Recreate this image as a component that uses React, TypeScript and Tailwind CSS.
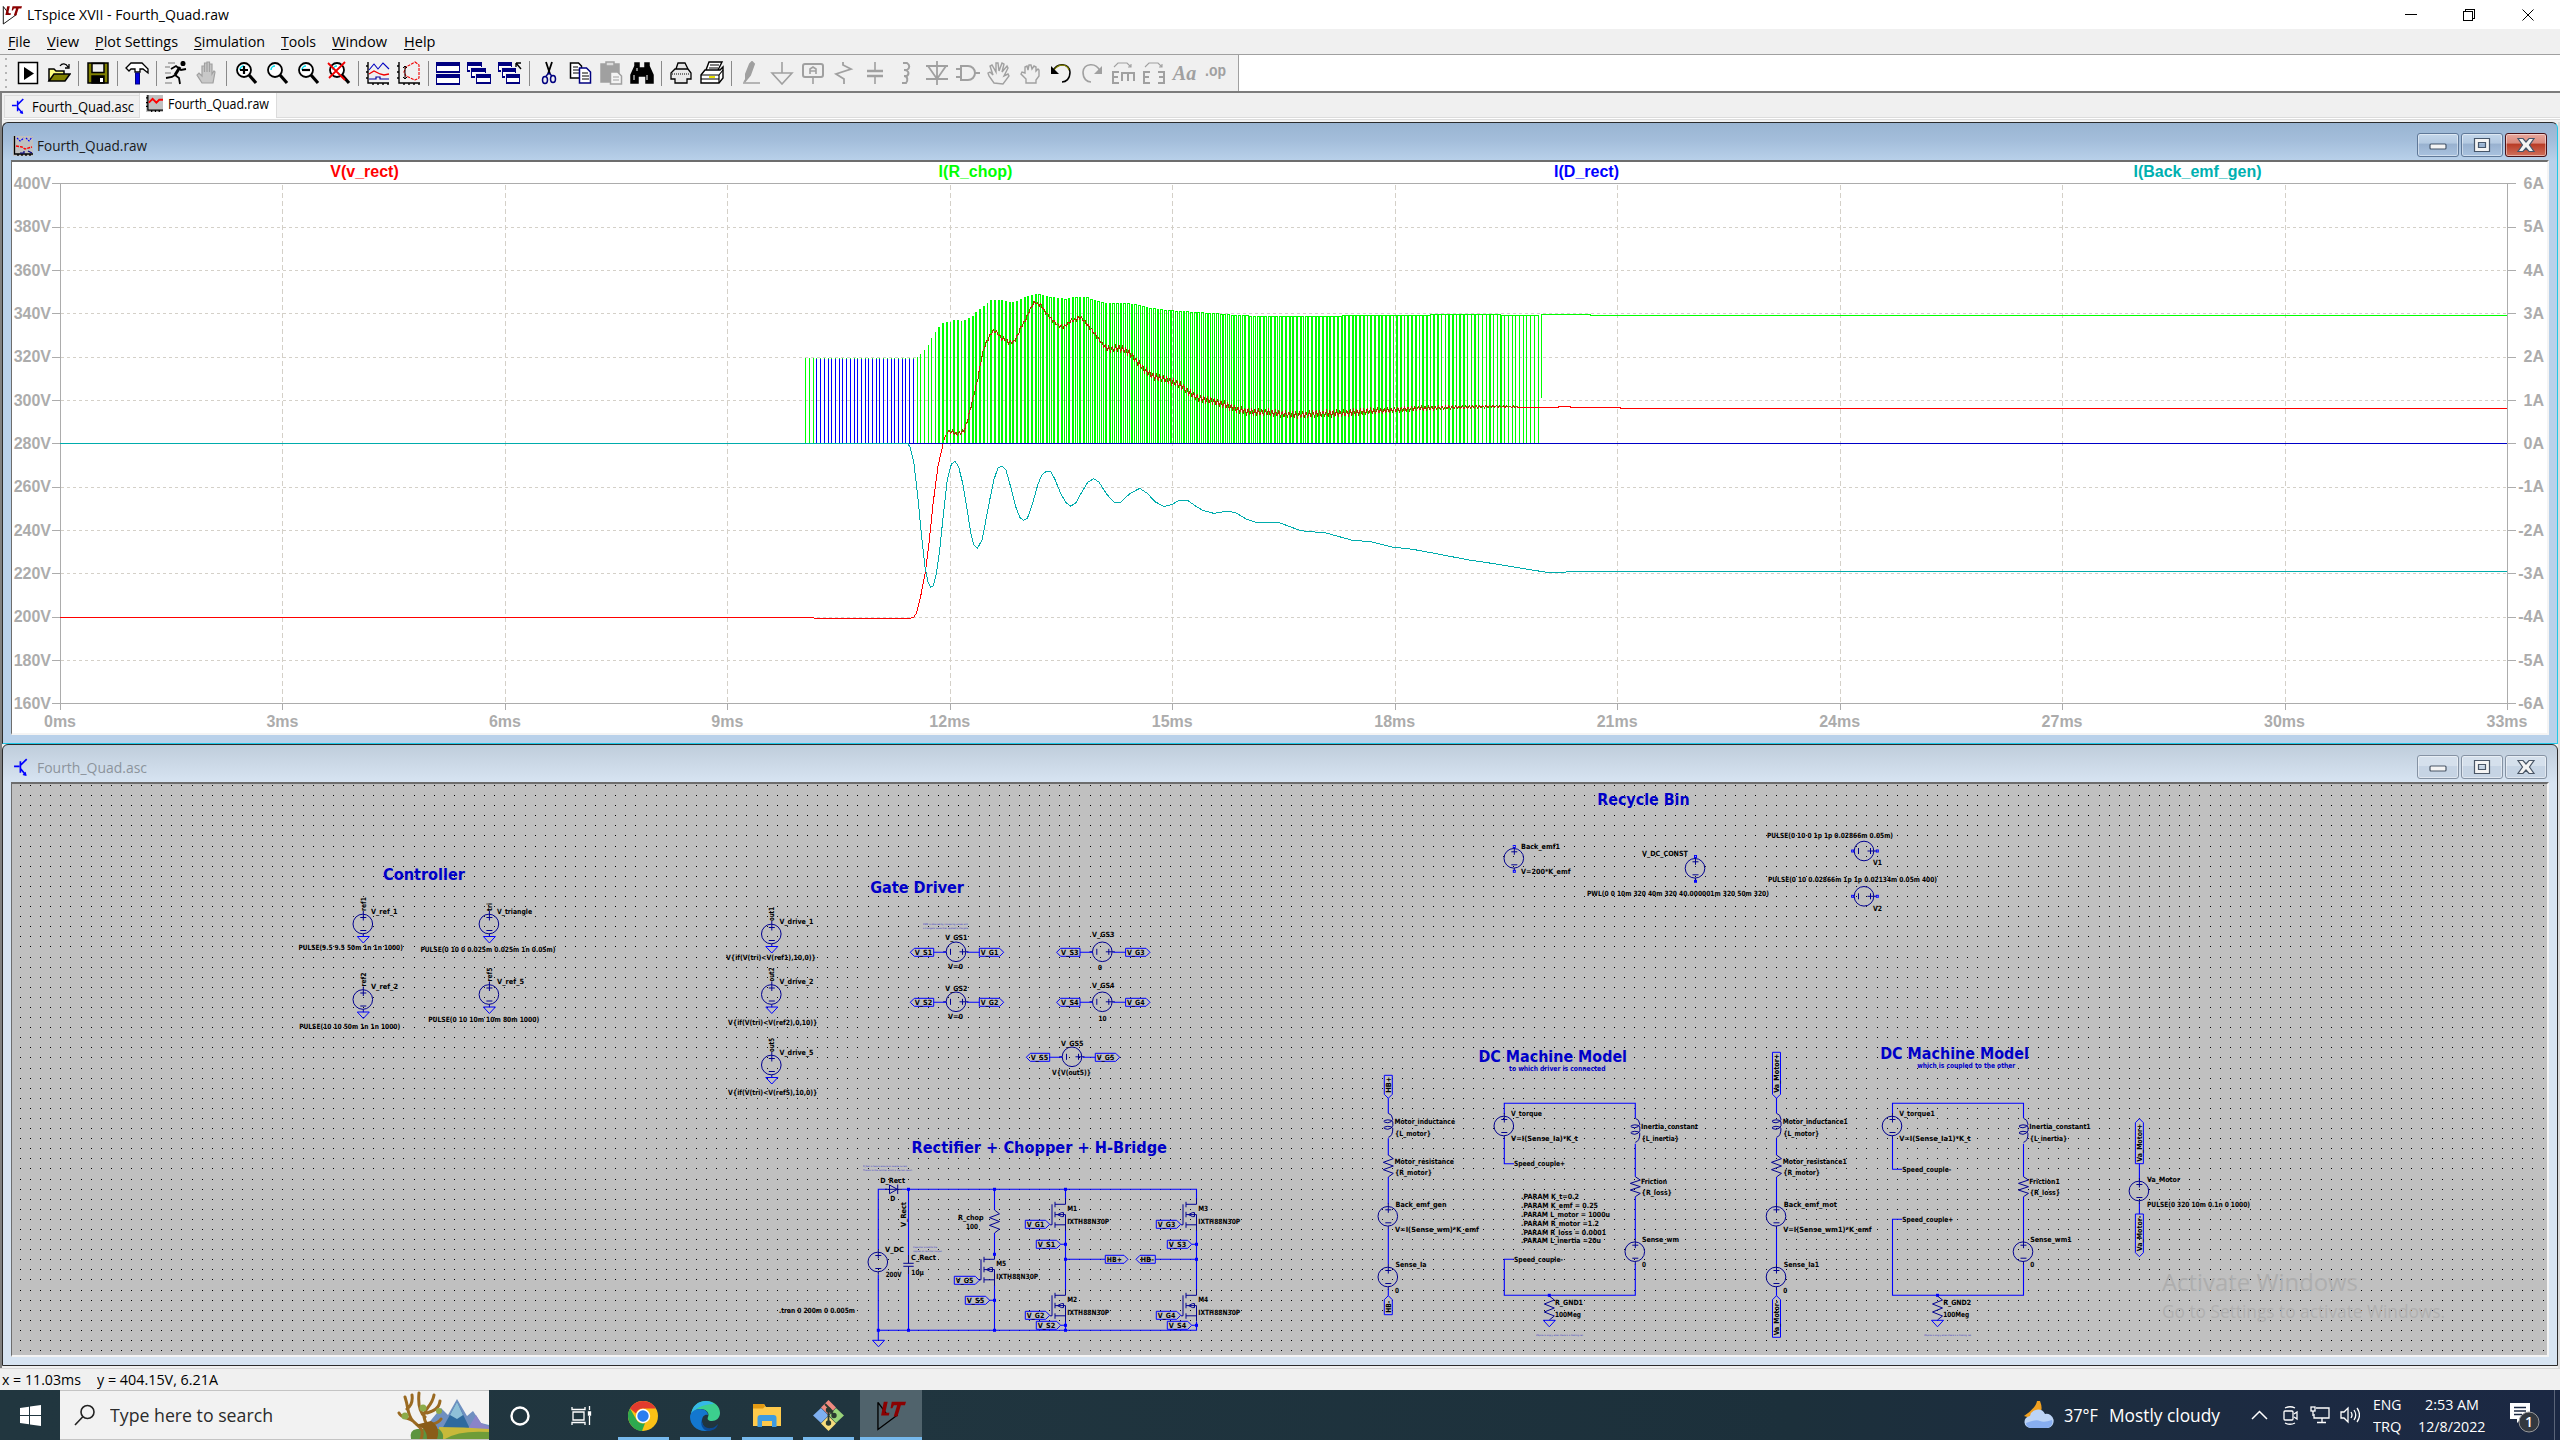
import React, { useLayoutEffect, useRef, type ReactNode } from "react";

const UI = "font-['Open_Sans','Noto_Sans',sans-serif]";

/* Text squeezed or stretched horizontally to a fixed width. */
function Fit({ w, className = "", children }: { w: number; className?: string; children: ReactNode }) {
  const ref = useRef<HTMLSpanElement>(null);
  useLayoutEffect(() => {
    const el = ref.current;
    if (el && el.offsetWidth) el.style.transform = `scaleX(${w / el.getBoundingClientRect().width})`;
  }, [w]);
  return (
    <span className={"inline-block shrink-0 whitespace-nowrap " + className} style={{ width: w }}>
      <span ref={ref} className="inline-block origin-left">{children}</span>
    </span>
  );
}

/* ------------------------------------------------------------------ */
/* Toolbar icons                                                       */
/* ------------------------------------------------------------------ */

function Ic({ children }: { children: ReactNode }) {
  return (
    <div className="flex w-[31px] shrink-0 items-center justify-center">
      <svg width="24" height="24" viewBox="0 0 24 24" fill="none" stroke="#000" strokeWidth="1.5">{children}</svg>
    </div>
  );
}
const Sep = () => (
  <div className="flex w-2 shrink-0 items-center justify-center">
    <div className="h-[25px] w-px bg-[#8a8a8a]" />
  </div>
);
const G = "#a0a0a0";

function Lens({ mark, color = "#00e0f0" }: { mark?: ReactNode; color?: string }) {
  return (
    <>
      <circle cx="10" cy="9" r="7" fill="#fff" strokeWidth="1.8" />
      <path d="M6 9a4 4 0 0 1 4-4" stroke={color} />
      <path d="M15 14l7 8" strokeWidth="3.2" />
      {mark}
    </>
  );
}
function MiniWin({ x, y, w, h }: { x: number; y: number; w: number; h: number }) {
  return (
    <g stroke="none" shapeRendering="crispEdges">
      <rect x={x - 1} y={y - 1} width={w + 1} height={h + 1} fill="#f0f0f0" />
      <rect x={x} y={y} width={w} height={h} fill="#000080" />
      <rect x={x + 1} y={y + 4} width={w - 2} height={h - 6} fill="#fff" />
    </g>
  );
}

function Toolbar() {
  return (
    <div className="flex h-[38px] border-b-2 border-[#7c7c7c] bg-white">
      <div className="flex w-[1239px] shrink-0 border-r border-[#a0a0a0] bg-[#f0f0f0]">
        <div className="flex w-[12px] shrink-0 flex-col items-center justify-center gap-[5px]">
          {[0, 1, 2, 3, 4].map((i) => <div key={i} className="size-[2px] bg-[#b4b4b4]" />)}
        </div>
        <Ic><rect x="2.5" y="1.500" width="19" height="21" fill="#fff" /><path d="M8 6l10 6.500-10 6.500z" fill="#000" stroke="none" /></Ic>
        <Ic><path d="M2 20V8h5l2 2h8v4" fill="#ffff80" /><path d="M2 20l5-7h16l-5 7z" fill="#808000" /><path d="M13 5c2-3 6-3 8 1m1-3v4h-4" strokeWidth="1.3" /></Ic>
        <Sep />
        <Ic><rect x="2" y="2" width="20" height="20" fill="#808000" /><rect x="6" y="2.5" width="12" height="9" fill="#f0f0f0" /><rect x="6" y="15" width="12" height="7" fill="#000" /><rect x="14" y="17" width="3" height="4" fill="#fff" stroke="none" /></Ic>
        <Sep />
        <Ic><path d="M1 7l5-5h11l6 6v4l-5-4h-3v3h-5V8H6l-2 2z" fill="#fff" strokeWidth="1.3" /><rect x="10.500" y="12" width="4" height="11" fill="#0000e0" stroke="#000080" strokeWidth="1" /></Ic>
        <Sep />
        <Ic><circle cx="19" cy="2.500" r="1.800" fill="#000" /><path d="M16 6l-5 8" strokeWidth="3" /><path d="M7 8l5-3 5 4 5-1M11 14l-3 2-6 1m9-3l4 3 1 6" strokeWidth="1.800" /><path d="M4 2h7M1 6h5M1 22h7M1 12h6" strokeWidth="1" stroke="#777" /></Ic>
        <Ic><path d="M7 22l-5-8 2-2 3 3V5h2.500v6V2h2.500v9V1h2.500v10V3h2.500v10l2-3 1 1-2 11z" fill="#c8c8c8" stroke={G} strokeWidth="1.2" /></Ic>
        <Sep />
        <Ic><Lens mark={<path d="M6 9h8M10 5v8" strokeWidth="2.2" />} /></Ic>
        <Ic><Lens /></Ic>
        <Ic><Lens mark={<path d="M6 9h8" strokeWidth="2.2" />} /></Ic>
        <Ic><Lens mark={<path d="M1 2l17 17M18 1L2 17" stroke="#f00000" strokeWidth="1.800" />} /></Ic>
        <Sep />
        <Ic><path d="M2 1v21h21M2 5H0M2 11H0M2 17H0M7 22v2M12 22v2M17 22v2M22 22v2" strokeWidth="1.4" /><path d="M3 9l5-6 4 5 5-6 6 6" stroke="#0000c0" strokeWidth="1.1" /><path d="M3 13l5-3 6 3 4 1 5-1" stroke="#f00000" strokeWidth="1.300" /><path d="M3 18h7v-2h4v2h9" stroke="#0000a0" strokeWidth="1.2" /></Ic>
        <Ic><path d="M2 1v21h21M2 5H0M2 11H0M2 17H0M7 22v2M12 22v2M17 22v2M22 22v2" strokeWidth="1.4" /><path d="M18 1l4 3v13l-4 2-9-4-2-4 2-5z" stroke="#f00000" strokeWidth="1.1" strokeDasharray="3 1" /><path d="M8 5v13M6 7l2-2 2 2M6 16l2 2 2-2" strokeWidth="1" /></Ic>
        <Sep />
        <Ic><MiniWin x={0} y={1} w={24} h={11} /><MiniWin x={0} y={13} w={24} h={11} /></Ic>
        <Ic><MiniWin x={0} y={1} w={15} h={10} /><MiniWin x={4} y={7} w={15} h={10} /><MiniWin x={9} y={13} w={15} h={10} /></Ic>
        <Ic><MiniWin x={0} y={1} w={14} h={10} /><MiniWin x={4} y={7} w={14} h={10} /><MiniWin x={8} y={13} w={14} h={10} /><path d="M18 2h5M18 2v4M18 2l5 6" strokeWidth="1.4" /></Ic>
        <Sep />
        <Ic><path d="M9 1l4 12M15 1l-4 12" strokeWidth="1.8" /><ellipse cx="8" cy="19" rx="2.500" ry="3.500" stroke="#000080" /><ellipse cx="16" cy="18" rx="2.500" ry="3.500" stroke="#000080" /><path d="M12 12l-3 3M12 12l3 3" stroke="#000080" /></Ic>
        <Ic><path d="M2.500 2h8l3 3v12h-11z" fill="#fff" /><path d="M5 6h5M5 9h6M5 12h6" strokeWidth="1" /><path d="M11.500 7h7l4 4v11h-11z" fill="#fff" stroke="#000080" /><path d="M14 12h6M14 15h7M14 18h7" strokeWidth="1" /></Ic>
        <Ic><path d="M2 3h18v18H2z" fill={G} stroke={G} /><path d="M7 1h8v4H7z" fill="#ddd" stroke={G} /><path d="M11.500 11h7l4 4v8h-11z" fill="#f4f4f4" stroke={G} /><path d="M14 16h6M14 19h6" stroke={G} strokeWidth="1" /></Ic>
        <Ic><path d="M1 22v-8L5 5V2h4v5h6V2h4v3l4 9v8h-7v-7H8v7z" fill="#000" /><path d="M4 14v5M17 14v5M7 7v3" stroke="#fff" strokeWidth="1" /></Ic>
        <Sep />
        <Ic><path d="M7 8l2-6h7l3 6M2 12l4-4h13l3 4v6h-4v4H6v-4H2z" fill="#e8e8e8" strokeWidth="1.3" /><path d="M3 13h18" strokeWidth="1.2" strokeDasharray="1 1" /></Ic>
        <Ic><path d="M6 9l3-8h13l-4 8M1 14l4-5h15l3-3v11l-4 5H1z" fill="#fff" strokeWidth="1.4" /><path d="M1 14h18v8M19 14l4-5M10 4h9M9 7h9M1 18h18" strokeWidth="1.2" /><path d="M9 16h6" stroke="#e8e000" strokeWidth="2" /></Ic>
        <Sep />
        <Ic><path d="M7 13l4-10 2-2 2 2-4 11-4 5z" fill={G} stroke={G} strokeWidth="2" /><path d="M4 22h17M5 21l3-5" stroke={G} strokeWidth="1.3" /></Ic>
        <Ic><path d="M12 1v11M2 12h20L12 23z" stroke={G} strokeWidth="1.6" /></Ic>
        <Ic><rect x="2" y="3" width="20" height="13" rx="2" stroke={G} strokeWidth="2" /><path d="M9 13V8l3-2 3 2v5M9 10h6M12 16v7" stroke={G} strokeWidth="1.6" /></Ic>
        <Ic><path d="M11 1v3l8 4L4 13l8 5v5" stroke={G} strokeWidth="1.8" /></Ic>
        <Ic><path d="M12 1v8M12 15v8" stroke={G} strokeWidth="1.6" /><path d="M4 10h16M4 15h16" stroke={G} strokeWidth="2.6" /></Ic>
        <Ic><path d="M9 2h4c3 2 3 5 0 7h-3c4 0 6 3 3 6h-3c4 0 4 5 2 7H8" stroke={G} strokeWidth="2" /></Ic>
        <Ic><path d="M12 0v24M1 5h22M1 18h22M3 5l9 13 9-13" stroke={G} strokeWidth="1.8" /></Ic>
        <Ic><path d="M5 5h7a7 7 0 0 1 0 14H5zM0 8h5M0 16h5M19 12h5" stroke={G} strokeWidth="2" /></Ic>
        <Ic><path d="M7 22l-5-7-1-3 2-1 3 3L3 5l2-1 4 7L9 2h2l1 8 3-8 2 1-2 8 5-6 1 2-4 8 4-2 1 2-6 8z" stroke={G} strokeWidth="1.4" /></Ic>
        <Ic><path d="M8 22v-4l-5-5 1-2 3 1 0-6 2-1 1 4 1-5 2 0 1 4 2-3 2 1v4l2-2 1 1v6l-3 4v3z" stroke={G} strokeWidth="1.4" /></Ic>
        <Ic><path d="M4 10c4-9 16-8 17 1 0 7-4 10-8 10" stroke="#000" strokeWidth="1.5" /><path d="M5 9c5-7 13-6 15 0" stroke="#808000" strokeWidth="1.2" /><path d="M2 5v8h8z" fill="#000" stroke="none" /></Ic>
        <Ic><path d="M20 10C16 1 4 2 3 11c0 7 4 10 8 10" stroke={G} strokeWidth="1.6" /><path d="M22 5v8h-8z" fill={G} stroke="none" /></Ic>
        <Ic><path d="M3 6l4-4h9l4 4m0-3v3h-3" stroke={G} strokeWidth="1.1" /><path d="M8 11H2v11h6M2 16h5M11 20v-8h13M17 12v8M23 12v8" stroke={G} strokeWidth="2" /></Ic>
        <Ic><path d="M3 6l4-4h9l4 4m0-3v3h-3" stroke={G} strokeWidth="1.1" /><path d="M8 11H2v11h6M2 16h5M16 11h6v11h-6M22 16h-5" stroke={G} strokeWidth="2" /></Ic>
        <div className="flex w-[31px] shrink-0 items-center justify-center font-['Liberation_Serif',serif] text-[20px] font-bold italic text-[#a0a0a0]">Aa</div>
        <div className="flex w-[31px] shrink-0 items-center justify-center pb-1 font-['Liberation_Sans',sans-serif] text-[17px] font-bold text-[#a0a0a0]"><Fit w={21}>.op</Fit></div>
      </div>
    </div>
  );
}

/* ------------------------------------------------------------------ */
/* Logos                                                               */
/* ------------------------------------------------------------------ */

function LtLogo({ w = 20, h = 20 }: { w?: number; h?: number }) {
  return (
    <svg width={w} height={h} viewBox="0 0 20 20" preserveAspectRatio="none">
      <path d="M1.300 1.500v17.500L14.500 9.500M1.300 1.500L7 9" fill="none" stroke="#000" strokeWidth=".9" />
      <path d="M5.200 1.200h2.600L6.200 8.200H9l-.5 1.800H3.400zM10.500 1.200h9.500l-.7 2.200h-2.700l-2.300 7.200h-2.500l2.300-7.200h-2.200l-1 2h-1.200z" fill="#8b0000" />
    </svg>
  );
}
const AscIcon = ({ s = 18 }: { s?: number }) => (
  <svg width={s} height={s} viewBox="0 0 18 18" fill="none" stroke="#0000ff" strokeWidth="1.6">
    <path d="M1 8h5M7 3v11M7 7l6-6M7 10l5 6" /><path d="M13 17l-4-1 3-3z" fill="#0000ff" stroke="none" />
  </svg>
);
const RawIcon = ({ s = 18 }: { s?: number }) => (
  <svg width={s} height={s} viewBox="0 0 18 18" fill="none">
    <rect width="18" height="18" fill="#c0c0c0" />
    <path d="M2 0v16h16M0 3h2M0 8h2M0 12h2M6 16v2M10 16v2M14 16v2" stroke="#000" strokeWidth="1.3" />
    <path d="M3 8l4-4 4 4 3-3h4" stroke="#f00" strokeWidth="2" />
  </svg>
);
const PlotIcon = () => (
  <svg width="20" height="20" viewBox="0 0 20 20" fill="none">
    <rect width="20" height="20" fill="#c0c0c0" />
    <path d="M1.500 0v18H20M5 18v2M9 18v2M13 18v2M17 18v2" stroke="#000" strokeWidth="1.3" />
    <path d="M4 2l3 3 4-3M13 2l3 3 3-4" stroke="#00f" strokeWidth="1.1" strokeDasharray="2 1" />
    <path d="M3 10l6 1 3 2 7-2" stroke="#f00" strokeWidth="1.4" strokeDasharray="3 1" />
    <path d="M7 17h4v-2M15 15l4 2" stroke="#000080" strokeWidth="1.2" />
  </svg>
);

/* ------------------------------------------------------------------ */
/* Child window frame                                                  */
/* ------------------------------------------------------------------ */

function WinButton({ kind, active }: { kind: "min" | "max" | "close"; active: boolean }) {
  const tone =
    !active ? "border-[#8592a3] bg-[linear-gradient(#d5e0ec_45%,#c6d4e4_45%)]"
    : kind === "close" ? "border-[#4a1015] bg-[linear-gradient(#e9a79c_0%,#d98a7d_42%,#b83a24_45%,#d0705c_100%)]"
    : "border-[#5f7898] bg-[linear-gradient(#c3d6ea_0%,#b3c9e1_42%,#98b1cf_45%,#a9c2df_100%)]";
  const ink = active ? "#46566a" : "#4a5666";
  return (
    <div className={"flex h-6 w-[42px] items-center justify-center rounded-[3px] border shadow-[inset_0_0_0_1px_rgba(255,255,255,0.45)] " + tone}>
      <svg width="20" height="16" viewBox="0 0 20 16" fill="#f4f4f4" stroke={ink} strokeWidth="1.200">
        {kind === "min" && <rect x="2" y="7" width="16" height="5" rx="1" />}
        {kind === "max" && <path fillRule="evenodd" d="M2.500 1.500h15v13h-15zM6.500 5.500v5h7v-5z" />}
        {kind === "close" && <path d="M2 1.500h5l3 3.500 3-3.500h5L13.500 8l4.500 6.500h-5L10 11l-3 3.500H2L6.500 8z" />}
      </svg>
    </div>
  );
}

function ChildWindow({ active, title, icon, children }: { active: boolean; title: string; icon: ReactNode; children: ReactNode }) {
  return (
    <section
      className={
        "flex h-[622px] flex-col rounded-t-[6px] border border-[#2b2b2b] px-2 pb-2 " +
        (active
          ? "border-r-[#20c8e8] border-b-[#20c8e8] bg-[#b9d1ea] bg-[linear-gradient(#99b4d1_0px,#a4bedb_18px,#b9d1ea_38px)]"
          : "bg-[#d7e4f2] bg-[linear-gradient(#bfcddb_0px,#cbd8e6_18px,#d7e4f2_38px)]")
      }
    >
      <header className="flex h-[37px] shrink-0 items-center pr-[2px] pl-[2px]">
        <span className="mt-[8px] flex w-[24px]">{icon}</span>
        <Fit w={110} className={UI + " mt-[6px] text-[15px] leading-5 " + (active ? "text-[#1a1a1a]" : "text-[#8c949c]")}>{title}</Fit>
        <div className="mt-[7px] ml-auto flex gap-[2px]">
          <WinButton kind="min" active={active} />
          <WinButton kind="max" active={active} />
          <WinButton kind="close" active={active} />
        </div>
      </header>
      <div className="flex-1 overflow-hidden border-t-2 border-r-2 border-b-2 border-l border-t-[#6d6d6d] border-r-[#f4f4f4] border-b-[#f4f4f4] border-l-[#6d6d6d]">{children}</div>
    </section>
  );
}

/* ------------------------------------------------------------------ */
/* Waveform plot (coordinates are in page pixels)                      */
/* ------------------------------------------------------------------ */

type Pt = [number, number];
const px = (v: number) => 780 + v / 1.96;
const py = (v: number) => 270 + v / 3;

const RED: Pt[] = [[66, 1042], [67, 1045], [255, 1045], [262, 1042], [268, 1028], [275, 985], [285, 905], [292, 820], [300, 700], [310, 585], [318, 535], [322, 505], [328, 486]];
const RIPPLE: Pt[] = [[328, 486], [337, 484], [345, 492], [356, 488], [362, 480], [368, 450], [375, 405], [381, 370], [388, 325], [395, 265], [402, 225], [410, 200], [418, 182], [426, 188], [434, 205], [441, 208], [448, 216], [458, 216], [465, 200], [472, 172], [480, 155], [488, 125], [495, 105], [500, 93], [505, 104], [512, 104], [517, 120], [527, 138], [535, 152], [545, 165], [555, 172], [563, 162], [572, 150], [580, 150], [585, 142], [592, 145], [600, 160], [610, 178], [620, 197], [632, 222], [642, 236], [652, 237], [665, 234], [675, 240], [685, 248], [700, 275], [715, 300], [733, 320], [750, 325], [768, 335], [785, 345], [800, 365], [820, 385], [845, 392], [870, 403], [890, 415], [915, 425], [955, 427], [990, 433], [1020, 435], [1050, 431], [1100, 430], [1150, 424], [1200, 420], [1250, 415], [1300, 413], [1350, 411], [1400, 409], [1450, 411]];
const CYAN: Pt[] = [[-1400, 520], [250, 520], [255, 532], [262, 575], [270, 680], [277, 790], [284, 890], [290, 935], [295, 952], [300, 948], [306, 915], [313, 840], [320, 735], [328, 630], [336, 582], [343, 574], [350, 590], [358, 640], [366, 710], [374, 790], [380, 825], [387, 835], [396, 810], [403, 755], [411, 690], [419, 630], [427, 594], [435, 588], [443, 600], [452, 650], [462, 710], [470, 742], [477, 751], [485, 745], [495, 700], [505, 645], [513, 615], [522, 604], [530, 604], [538, 625], [550, 670], [560, 697], [570, 709], [580, 698], [592, 665], [603, 637], [615, 626], [625, 636], [640, 672], [655, 697], [668, 696], [685, 672], [705, 655], [720, 670], [735, 695], [753, 710], [770, 702], [782, 691], [800, 692], [815, 709], [830, 722], [850, 730], [880, 723], [895, 730], [915, 748], [932, 757], [980, 759], [1000, 770], [1020, 782], [1070, 789], [1120, 810], [1160, 816], [1200, 831], [1240, 838], [1300, 855], [1350, 870], [1400, 881], [1450, 894], [1495, 905], [1510, 908], [1540, 908], [1541, 905], [1650, 905]];
const ENVELOPE: Pt[] = [[48, 262], [262, 262], [275, 250], [290, 220], [305, 180], [318, 160], [330, 152], [365, 150], [378, 135], [395, 112], [410, 90], [430, 90], [455, 97], [465, 92], [475, 82], [500, 71], [515, 76], [545, 84], [560, 86], [580, 80], [598, 80], [615, 89], [635, 98], [680, 98], [710, 108], [740, 117], [780, 122], [830, 127], [880, 133], [920, 137], [1000, 138], [1200, 135], [1300, 133], [1520, 134]];

function interp(pts: Pt[], v: number) {
  for (let i = 1; i < pts.length; i++) {
    if (v <= pts[i][0]) {
      const [a, b] = pts[i - 1], [c, d] = pts[i];
      return b + ((d - b) * Math.max(0, v - a)) / (c - a);
    }
  }
  return pts[pts.length - 1][1];
}
const line = (pts: Pt[]) => "M" + pts.map(([a, b]) => `${px(a).toFixed(1)} ${py(b).toFixed(1)}`).join("L");

const X0 = 60.5, XS = 222.45, MS = 74.15, ZERO = 443.5;

/* Chopper current: 20 kHz pulses whose duty rises from 0 to 1 over 10..20 ms. */
function choppedPath(first: number, last: number, flat?: number) {
  let d = "";
  const period = MS * 0.05;
  for (let k = first; k <= last; k++) {
    const t = 10.045 + k * 0.05;
    const duty = t < 11.8 ? 0 : Math.min(1, (t - 10) / 10);
    const mid = X0 + t * MS;
    const a = Math.round(mid - (duty * period) / 2) + 0.5;
    const b = Math.round(mid + (duty * period) / 2) + 0.5;
    const top = Math.round(flat ?? py(interp(ENVELOPE, (mid - 780) * 1.96))) + 0.5;
    d += `${d ? "L" : "M"}${a} ${ZERO}V${top}H${b}V${ZERO}`;
  }
  return d;
}

function ripplePath() {
  let d = "";
  let up = false;
  for (let x = px(328); x < px(1450); x += 1.7) {
    const z = (x - 780) * 1.96;
    const amp = z < 640 ? 1.5 : z < 1100 ? 2.6 : 2.6 - (1.9 * (z - 1100)) / 350;
    up = !up;
    d += `${d ? "L" : "M"}${x.toFixed(1)} ${(py(interp(RIPPLE, z)) + (up ? amp : -amp)).toFixed(1)}`;
  }
  return d;
}

function Plot() {
  const left = ["400V", "380V", "360V", "340V", "320V", "300V", "280V", "260V", "240V", "220V", "200V", "180V", "160V"];
  const names: [string, number, string][] = [["V(v_rect)", 364.5, "#ff0000"], ["I(R_chop)", 975.5, "#00ff00"], ["I(D_rect)", 1586.500, "#0000ff"], ["I(Back_emf_gen)", 2197.500, "#00b0b0"]];
  return (
    <svg width="2535" height="571" viewBox="12 162 2535 571" className="block bg-white" fontFamily="'Liberation Sans', Arial, sans-serif" fontWeight="700" fontSize="16">
      <g shapeRendering="crispEdges" fill="none">
        {left.map((_, i) => i > 0 && i < 12 && (
          <line key={i} x1={X0} x2="2507" y1={Math.round(183.3 + i * 43.33) + 0.5} y2={Math.round(183.3 + i * 43.33) + 0.5} stroke="#d4d0c8" strokeDasharray="3 3" />
        ))}
        {Array.from({ length: 10 }, (_, i) => Math.round(60 + (i + 1) * XS) + 0.5).map((x) => (
          <line key={x} x1={x} x2={x} y1="185" y2="703" stroke="#d4d0c8" strokeDasharray="5 3" />
        ))}
        <path d="M52 183.500H2516M52 703.500H2516M60.500 183V708M2507.500 183V708" stroke="#acacac" />
        {left.map((_, i) => {
          const y = Math.round(183.3 + i * 43.33) + 0.5;
          return <path key={i} d={`M52 ${y}h8M2508 ${y}h8`} stroke="#acacac" />;
        })}
        {left.slice(0, 12).map((_, i) => {
          const x = Math.round(60 + i * XS) + 0.5;
          return <path key={i} d={`M${x} 704v6`} stroke="#acacac" />;
        })}
      </g>
      {left.map((l, i) => <text key={l} x="51" y={189 + i * 43.33} textAnchor="end" fill="#acacac">{l}</text>)}
      {left.map((_, i) => <text key={i} x="2544" y={189 + i * 43.33} textAnchor="end" fill="#acacac">{6 - i}A</text>)}
      {left.slice(0, 12).map((_, i) => <text key={i} x={60 + i * XS} y="727" textAnchor="middle" fill="#acacac">{i * 3}ms</text>)}
      {names.map(([n, x, c]) => <text key={n} x={x} y="177" textAnchor="middle" fill={c}>{n}</text>)}

      <g fill="none" strokeWidth="1" shapeRendering="crispEdges">
        <path d={`M60 617.500H${px(66)}`} stroke="#ff0000" />
        <path d={line(RED)} stroke="#ff0000" />
        <path d={choppedPath(0, 197)} stroke="#00ff00" />
        <path d="M1541.500 398V314.500H1590V315.500H2507" stroke="#00ff00" />
        <path d={choppedPath(3, 29, 358)} stroke="#0000ff" />
        <path d={`M816 ${ZERO}H2507`} stroke="#0000c8" />
        <path d={ripplePath()} stroke="#a04000" strokeWidth="1.1" />
        <path d="M1518 407.500H1558V406.500H1570V407.500H1620V408.500H2507" stroke="#ff0000" />
        <path d={line(CYAN)} stroke="#00acac" />
        <path d="M60 443.500H909M1620 571.500H2507" stroke="#00acac" />
      </g>
    </svg>
  );
}

/* ------------------------------------------------------------------ */
/* Schematic                                                           */
/* ------------------------------------------------------------------ */

const WIRE = "#0000ff";
const PART = "#000090";

function T({ x, y, w, s = 7.2, c = "#000", children }: { x: number; y: number; w: number; s?: number; c?: string; children: string }) {
  return <text x={x} y={y} textLength={w} lengthAdjust="spacingAndGlyphs" fontSize={s} fill={c} stroke="none">{children}</text>;
}
function Title({ x, y, w, children }: { x: number; y: number; w: number; children: string }) {
  return <T x={x} y={y} w={w} s={16.4} c="#0000c8">{children}</T>;
}
function Note({ x, y, w, children }: { x: number; y: number; w: number; children: string }) {
  return <g fontWeight="400" opacity="0.75"><T x={x} y={y} w={w} s={2.4} c="#0000c8">{children}</T></g>;
}
/* Text reading upward; (x, y) is the lower end of its baseline. */
function V({ x, y, w, children }: { x: number; y: number; w: number; children: string }) {
  return <g transform={`translate(${x} ${y}) rotate(-90)`}><T x={0} y={0} w={w}>{children}</T></g>;
}
const W = ({ d }: { d: string }) => <path d={d} stroke={WIRE} strokeWidth="1.1" />;
const Dot = ({ x, y }: { x: number; y: number }) => <rect x={x - 1.5} y={y - 1.5} width="3" height="3" fill={WIRE} stroke="none" />;
const Gnd = ({ x, y }: { x: number; y: number }) => <path d={`M${x - 6} ${y}h12l-6 6.500z`} stroke={WIRE} />;
const Src = ({ x, y }: { x: number; y: number }) => (
  <g stroke={PART}>
    <circle cx={x - 0.5} cy={y} r="9.8" />
    <path d={`M${x} ${y - 13}v9.500M${x - 3} ${y - 6.500}h6M${x - 3} ${y + 6.500}h6M${x} ${y + 9.800}v3`} />
  </g>
);
const HSrc = ({ x, y }: { x: number; y: number }) => (
  <g stroke={PART}>
    <circle cx={x} cy={y} r="9.8" />
    <path d={`M${x - 5.500} ${y - 3}v6M${x + 6.500} ${y - 3}v6M${x + 3.500} ${y}h9M${x - 9.800} ${y}h-3`} />
  </g>
);
const Res = ({ x, y, h = 22 }: { x: number; y: number; h?: number }) => {
  const u = h / 6;
  return <path d={`M${x} ${y}l5 ${u}l-10 ${u}l10 ${u}l-10 ${u}l10 ${u}l-5 ${u}`} stroke={PART} />;
};
const Ind = ({ x, y }: { x: number; y: number }) => (
  <path stroke={PART} d={`M${x} ${y}q4 1 4.500 6q-1 3-5 3.500q-4-.5-4-1.500t4-1.500q4 0 5 2v4q-1 3-5 3.500q-4-.5-4-1.500t4-1.500q4 0 5 2q0 8-4.500 9`} />
);
const Term = ({ x, y }: { x: number; y: number }) => <rect x={x - 1} y={y - 1} width="2" height="2" stroke={WIRE} fill="#c0c0c0" />;

/* Horizontal net port from x to its tip; dir is the side the tip is on. */
function Port({ x, y, w = 24.4, dir, tw = 17.5, children }: { x: number; y: number; w?: number; dir: "l" | "r"; tw?: number; children: string }) {
  const k = 4;
  const d = dir === "r" ? `M${x} ${y - 4}h${w - k}l${k} 4l${-k} 4h${-(w - k)}z` : `M${x} ${y}l${k} -4h${w - k}v8h${-(w - k)}z`;
  return <><path d={d} stroke={WIRE} /><T x={dir === "r" ? x + 1.5 : x + 4.5} y={y + 2.6} w={tw}>{children}</T></>;
}
function VPort({ x, y, h, dir, children }: { x: number; y: number; h: number; dir: "u" | "d"; children: string }) {
  const k = 4;
  const d = dir === "d" ? `M${x - 4} ${y}h8v${h - k}l-4 ${k}l-4 ${-k}z` : `M${x} ${y}l4 ${k}v${h - k}h-8v${-(h - k)}z`;
  return <><path d={d} stroke={WIRE} /><V x={x + 2.7} y={dir === "d" ? y + h - k - 1.5 : y + h - 2} w={h - k - 3}>{children}</V></>;
}
function RefSrc({ x, y, net, name, w }: { x: number; y: number; net: string; name: string; w: number }) {
  return (
    <>
      <V x={x + 2.5} y={y - 13} w={net === "tri" ? 8 : 14}>{net}</V>
      <Src x={x} y={y} />
      <Gnd x={x} y={y + 12.500} />
      <T x={x + 7.7} y={y - 10.300} w={w}>{name}</T>
    </>
  );
}
function GateSrc({ x, y, n }: { x: number; y: number; n: number }) {
  return (
    <>
      <HSrc x={x} y={y - 0.5} />
      <W d={`M${x - 22.300} ${y}h12.500M${x + 11} ${y}h12.500`} />
      <Port x={x - 45.7} y={y} w={23.4} dir="l">{"V_S" + n}</Port>
      <Port x={x + 23.3} y={y} dir="r">{"V_G" + n}</Port>
    </>
  );
}
function Mos({ x, y, n, ny = 7 }: { x: number; y: number; n: number; ny?: number }) {
  return (
    <>
      <g stroke={PART}>
        <path d={`M${x} ${y - 6}v6h-10.500M${x - 10.500} ${y - 2.500}v5.500M${x - 10.500} ${y + 7.500}v5.500M${x - 10.500} ${y + 18}v5.500M${x - 13.500} ${y}v20.500h-2M${x - 10.500} ${y + 10.300}h10.500v16M${x - 10.500} ${y + 20.500}h10.500`} />
        <path d={`M${x - 8} ${y + 10.300}l4-2h2v4h-2z`} />
      </g>
      <T x={x + 1.7} y={y + ny} w={10}>{"M" + n}</T>
      <T x={x + 1.7} y={y + ny + 12.3} w={42}>IXTH88N30P</T>
    </>
  );
}

function Machine({ sfx, emf, top, bot, yTop, yBot, plusFirst, yUp, yLow }: {
  sfx: string; emf: string; top: string; bot: string; yTop: number; yBot: number; plusFirst: boolean; yUp: number; yLow: number;
}) {
  const k = sfx ? 4.5 : 0;
  return (
    <>
      <VPort x={28.3} y={yTop} h={58.3 - yTop} dir="d">{top}</VPort>
      <W d="M28.300 58.300v15M28.300 98.300v17M28.300 137v27M28.300 189v35M28.300 249v6.700" />
      <Ind x={28.3} y={73.3} />
      <Res x={28.3} y={115} />
      <Src x={28.3} y={176.3} />
      <Src x={28.3} y={237} />
      <VPort x={28.3} y={255.7} h={yBot - 255.7} dir="u">{bot}</VPort>
      <T x={34.5} y={83.5} w={60.5 + k}>{"Motor_inductance" + sfx}</T>
      <T x={35} y={95.7} w={36}>{"{L_motor}"}</T>
      <T x={34.5} y={123.5} w={59.5 + k}>{"Motor_resistance" + sfx}</T>
      <T x={35} y={134.7} w={37}>{"{R_motor}"}</T>
      <T x={35.5} y={166.5} w={51 + k / 2}>{emf}</T>
      <T x={35} y={191.5} w={84 + k}>{`V=I(Sense_wm${sfx})*K_emf`}</T>
      <T x={35.5} y={226.5} w={31 + k}>{"Sense_Ia" + sfx}</T>
      <T x={35} y={252.5} w={4}>0</T>

      <W d={`M144.300 74V63.300H275.300V78M144.300 98V${yUp}H154M154 ${yLow}H144.300V255.300H275.300V224M275.300 103.700V136.700M275.300 156.700V199`} />
      <Src x={144.3} y={86} />
      <T x={151} y={75.7} w={31 + k}>{"V_torque" + sfx}</T>
      <T x={151} y={100.7} w={67 + k}>{`V=I(Sense_Ia${sfx})*K_t`}</T>
      <T x={154} y={yUp + 2.5} w={plusFirst ? 51 : 49}>{plusFirst ? "Speed_couple+" : "Speed_couple-"}</T>
      <T x={154} y={yLow + 2.5} w={plusFirst ? 49 : 51}>{plusFirst ? "Speed_couple-" : "Speed_couple+"}</T>
      <Ind x={275.3} y={78.3} />
      <Res x={275.3} y={136.7} h={20} />
      <Src x={275.3} y={211.7} />
      <T x={281} y={88.7} w={57 + k}>{"Inertia_constant" + sfx}</T>
      <T x={281.5} y={100.7} w={37.5}>{"{L_inertia}"}</T>
      <T x={281} y={143.7} w={26 + k}>{"Friction" + sfx}</T>
      <T x={281.5} y={154.7} w={30.5}>{"{R_loss}"}</T>
      <T x={282} y={201.7} w={37 + k}>{"Sense_wm" + sfx}</T>
      <T x={282} y={226.5} w={4}>0</T>
      <Dot x={189.3} y={255.3} />
      <Res x={189.3} y={256} h={24} />
      <Gnd x={189.3} y={280.3} />
      <T x={195} y={265} w={28}>{sfx ? "R_GND2" : "R_GND1"}</T>
      <T x={195} y={277} w={26}>100Meg</T>
      <Note x={176} y={296.3} w={47}>LTspice is angry when there is a floating net</Note>
    </>
  );
}

const PARAMS: [string, number, number][] = [
  [".PARAM K_t=0.2", 158.5, 58], [".PARAM K_emf = 0.25", 167.5, 77], [".PARAM L_motor = 1000u", 176.5, 89],
  [".PARAM R_motor =1.2", 185.5, 78], [".PARAM R_loss = 0.0001", 194.5, 85], [".PARAM L_inertia =20u", 202.5, 80],
];

function gridDots() {
  let d = "";
  for (let r = 0; r < 57; r++) for (let c = 0; c < 251; c++) d += `M${Math.round(20 + c * 10.09)} ${Math.round(785 + r * 10.09)}.5h1`;
  return d;
}

function Schematic() {
  return (
    <svg width="2535" height="572" viewBox="12 784 2535 572" className="block bg-[#c0c0c0]" fill="none" strokeWidth="1" fontFamily="'DejaVu Sans','DejaVu Sans Condensed',sans-serif" fontWeight="700">
      <path d={gridDots()} stroke="#000" shapeRendering="crispEdges" />

      <g transform="translate(280 840)">
        <Title x={103} y={40} w={82}>Controller</Title>
        <RefSrc x={83.3} y={84} net="ref1" name="V_ref_1" w={26.5} />
        <RefSrc x={209.4} y={84} net="tri" name="V_triangle" w={35} />
        <RefSrc x={83.3} y={159.5} net="ref2" name="V_ref_2" w={27} />
        <RefSrc x={209.4} y={154.5} net="ref5" name="V_ref_5" w={27} />
        <T x={18.4} y={110} w={104.5}>PULSE(9.5 9.5 50m 1n 1n 1000)</T>
        <T x={140.4} y={112} w={135}>PULSE(0 10 0 0.025m 0.025m 1n 0.05m)</T>
        <T x={19.2} y={189} w={101}>PULSE(10 10 50m 1n 1n 1000)</T>
        <T x={148.2} y={182} w={111}>PULSE(0 10 10m 10m 80m 1000)</T>
        <RefSrc x={491.8} y={94} net="out1" name="V_drive_1" w={34} />
        <RefSrc x={491.8} y={154.5} net="out2" name="V_drive_2" w={34} />
        <RefSrc x={491.8} y={225} net="out5" name="V_drive_5" w={34} />
        <T x={446} y={120} w={90}>{"V{if(V(tri)<V(ref1),10,0)}"}</T>
        <T x={448} y={185} w={89.5}>{"V{if(V(tri)<V(ref2),0,10)}"}</T>
        <T x={448} y={255} w={89.5}>{"V{if(V(tri)<V(ref5),10,0)}"}</T>
      </g>

      <g transform="translate(840 860)">
        <Title x={30.2} y={33} w={93.8}>Gate Driver</Title>
        <Note x={83} y={65.3} w={45}>PWM is obtained by comparing values with</Note>
        <Note x={83} y={69.3} w={45}>a triangular wave then applied to the gate</Note>
        <GateSrc x={116} y={92.3} n={1} />
        <GateSrc x={116} y={142.3} n={2} />
        <GateSrc x={262.3} y={92.3} n={3} />
        <GateSrc x={262.3} y={142.3} n={4} />
        <GateSrc x={232} y={197.3} n={5} />
        <T x={105.3} y={80} w={22}>V_GS1</T>
        <T x={108} y={109} w={15}>V=0</T>
        <T x={105.3} y={131} w={22}>V_GS2</T>
        <T x={108} y={159} w={15}>V=0</T>
        <T x={252} y={77} w={22.5}>V_GS3</T>
        <T x={258} y={110} w={4}>0</T>
        <T x={252} y={128} w={22.5}>V_GS4</T>
        <T x={258.5} y={161} w={8}>10</T>
        <T x={221} y={186} w={22.5}>V_GS5</T>
        <T x={212} y={215} w={39}>{"V{V(out5)}"}</T>
      </g>

      <g transform="translate(840 1130)">
        <Title x={71.5} y={23} w={255.5}>Rectifier + Chopper + H-Bridge</Title>
        <Note x={23} y={37} w={44}>D_Rect is here to ensure no reverse current</Note>
        <Note x={23} y={41.3} w={49}>Thanks to the rectifier which is the last resort</Note>
        <W d="M38.300 119V59.300H47M62 59.300H356.500V70M38.300 145V210M38.300 200.300H356.500V192M68.500 59.300V130M68.500 140V200.300M154.500 59.300V80M154.500 103V124M154.500 155V200.300M225.500 59.300V69M225.500 100V160M225.500 191V200.300M356.500 100V160M225.500 129.300H265M315.300 129.300H356.500" />
        <g stroke={PART}>
          <path d="M45 59.300H62M49.500 55V63.700L57.300 59.300zM57.700 54.500V64M68.500 125V133.300M63.300 133.300H73.700M63.300 136.300H73.700M68.500 136.300V144" />
        </g>
        <Src x={38.3} y={132} />
        <Gnd x={38.5} y={210.3} />
        <Res x={154.5} y={80} h={23} />
        <Mos x={154.5} y={129.3} n={5} />
        <Mos x={225.5} y={74.3} n={1} />
        <Mos x={225.5} y={165.3} n={2} />
        <Mos x={356.5} y={74.3} n={3} />
        <Mos x={356.5} y={165.3} n={4} />
        <Port x={114.3} y={150.3} w={25} dir="r">V_G5</Port>
        <Port x={125.3} y={170.3} dir="r">V_S5</Port>
        <W d="M149.700 170.300h5M221 114.300h4.500M221 195.300h4.500M352 114.300h4.500M352 195.300h4.500" />
        <Port x={185.3} y={94.3} dir="r">V_G1</Port>
        <Port x={196.3} y={114.3} dir="r">V_S1</Port>
        <Port x={185.3} y={185.3} dir="r">V_G2</Port>
        <Port x={196.3} y={195.3} dir="r">V_S2</Port>
        <Port x={316.3} y={94.3} dir="r">V_G3</Port>
        <Port x={327.3} y={114.3} dir="r">V_S3</Port>
        <Port x={316.3} y={185.3} dir="r">V_G4</Port>
        <Port x={327.3} y={195.3} dir="r">V_S4</Port>
        <Port x={265.3} y={129.3} w={22.7} tw={15} dir="r">HB+</Port>
        <Port x={296} y={129.3} w={19.3} tw={13.500} dir="l">HB-</Port>
        {([[68.5, 59.3], [154.5, 59.3], [225.5, 59.3], [38.3, 200.3], [68.5, 200.3], [154.5, 200.3], [225.5, 200.3], [154.5, 124.3], [154.5, 170.3], [225.5, 114.3], [225.5, 129.3], [225.5, 195.3], [356.5, 114.3], [356.5, 129.3], [356.5, 195.3]] as Pt[]).map(([x, y]) => <Dot key={x + "-" + y} x={x} y={y} />)}
        <T x={40.3} y={53} w={24.7}>D_Rect</T>
        <T x={50.3} y={71} w={5}>D</T>
        <V x={66.3} y={97} w={25}>V_Rect</V>
        <T x={45} y={122} w={19}>V_DC</T>
        <T x={45.7} y={147} w={16}>200V</T>
        <T x={71} y={130} w={25}>C_Rect</T>
        <T x={71.3} y={145} w={12.5}>10µ</T>
        <Note x={73} y={118} w={24}>Capacitor smooths the</Note>
        <Note x={73} y={122} w={29}>ripples at rectifier output</Note>
        <T x={118} y={90} w={25.5}>R_chop</T>
        <T x={126} y={99} w={12}>100</T>
        <T x={-61} y={183} w={76}>.tran 0 200m 0 0.005m</T>
      </g>

      <g transform="translate(1360 1040)">
        <Title x={118.5} y={22} w={148.5}>DC Machine Model</Title>
        <T x={149} y={30.7} w={96.5} c="#0000c8">to which driver is connected</T>
        <Machine sfx="" emf="Back_emf_gen" top="HB+" bot="HB-" yTop={35.3} yBot={274.7} plusFirst yUp={123.7} yLow={219.3} />
        {PARAMS.map(([s, y, w]) => <T key={s} x={161} y={y} w={w}>{s}</T>)}
      </g>
      <g transform="translate(1748.2 1040)">
        <Title x={132} y={19.3} w={148.7}>DC Machine Model</Title>
        <T x={169} y={28} w={98} c="#0000c8">which is coupled to the other</T>
        <Machine sfx="1" emf="Back_emf_mot" top="Va_Motor+" bot="Va_Motor-" yTop={12.3} yBot={297.3} plusFirst={false} yUp={129.3} yLow={179.3} />
      </g>

      <VPort x={2139.4} y={1118.7} h={45} dir="u">Va_Motor+</VPort>
      <W d="M2139.400 1163.700V1179M2139.400 1203V1214" />
      <Src x={2139.4} y={1191} />
      <VPort x={2139.4} y={1214} h={42.7} dir="d">Va_Motor-</VPort>
      <T x={2147} y={1182} w={33}>Va_Motor</T>
      <T x={2147} y={1207} w={103}>PULSE(0 320 10m 0.1n 0 1000)</T>

      <g transform="translate(1480 780)">
        <Title x={117.2} y={25} w={92.5}>Recycle Bin</Title>
        <Src x={34.3} y={78.3} />
        <Term x={34.3} y={66.5} /><Term x={34.3} y={91.3} />
        <T x={41} y={68.7} w={39}>Back_emf1</T>
        <T x={41} y={93.7} w={49.5}>V=200*K_emf</T>
        <Src x={215.5} y={88.3} />
        <Term x={215.5} y={76.5} /><Term x={215.5} y={101.3} />
        <T x={162} y={76} w={46}>V_DC_CONST</T>
        <T x={107} y={116} w={182}>PWL(0 0 10m 320 40m 320 40.000001m 320 50m 320)</T>
        <HSrc x={384} y={71} />
        <Term x={372.7} y={71} /><Term x={397.3} y={71} />
        <T x={287} y={58} w={126}>PULSE(0 10 0 1p 1p 0.02866m 0.05m)</T>
        <T x={393} y={85} w={9}>V1</T>
        <HSrc x={384} y={116.3} />
        <Term x={372.7} y={116.3} /><Term x={397.3} y={116.3} />
        <T x={288} y={102} w={169}>PULSE(0 10 0.02866m 1p 1p 0.02134m 0.05m 400)</T>
        <T x={393} y={131} w={9}>V2</T>
      </g>

      <g fontFamily="'Open Sans','Noto Sans',sans-serif" fontWeight="400">
        <T x={2162} y={1290.7} w={196} s={24} c="#aeaeae">Activate Windows</T>
        <T x={2162} y={1317.7} w={283} s={18} c="#b0b0b0">Go to Settings to activate Windows.</T>
      </g>
    </svg>
  );
}

/* ------------------------------------------------------------------ */
/* Taskbar                                                             */
/* ------------------------------------------------------------------ */

function TaskButton({ active = false, open = true, children }: { active?: boolean; open?: boolean; children: ReactNode }) {
  return (
    <div className={"flex w-[61.8px] shrink-0 flex-col items-center " + (active ? "bg-[#50636c]" : "")}>
      <div className="flex h-[47px] items-center pt-1">{children}</div>
      {open && <div className={"h-[3px] bg-[#76b9ed] " + (active ? "w-full" : "w-[51px]")} />}
    </div>
  );
}

function SearchArt() {
  return (
    <svg width="92" height="48" viewBox="0 0 92 48" fill="none">
      <path d="M30 48v-14l14-17 7 7 9-16 10 17 6-5 8 12 8 2v14z" fill="#6f8fc0" />
      <path d="M44 40l16-29 14 29z" fill="#2f6a9e" />
      <path d="M53 24l7-13 6 13-6 4z" fill="#8fc0d8" />
      <path d="M72 36l7-12 5 8 8 4v8H70z" fill="#8a84c8" />
      <path d="M42 36q24 0 50 2v10H42z" fill="#c9b93a" />
      <path d="M48 48q14-9 44-7v7z" fill="#6f9c38" />
      <path d="M14 48q-2-9 6-10h22q5 4 4 10z" fill="#5c9440" />
      <path d="M24 48c4-10-2-12-8-18S12 18 8 6M16 30c-4-3-12-3-14-8M10 18c4-3 6-7 5-14M32 48c3-12-4-14-5-22s8-10 10-22M28 26c-6-5-7-14-6-24M30 22c6-2 12-4 13-12M28 36c8-4 12-2 16-8" stroke="#9a6a22" strokeWidth="3" strokeLinecap="round" />
      <path d="M18 34q12 2 12 14h10q4-12-6-18z" fill="#8a5c18" />
      <circle cx="26" cy="17" r="3.500" fill="#8cab4a" /><circle cx="8" cy="25" r="3.500" fill="#8cab4a" /><circle cx="42" cy="20" r="3" fill="#8cab4a" />
    </svg>
  );
}

function Taskbar() {
  return (
    <footer className={UI + " flex h-[50px] shrink-0 bg-[linear-gradient(90deg,#21363f_0%,#20353f_35%,#1c303b_70%,#1c2a42_90%,#1b2843_100%)] text-white"}>
      <div className="flex w-[60px] items-center justify-center">
        <svg width="21" height="21" viewBox="0 0 21 21" fill="#fff"><path d="M0 3l9-1.300V10H0zM10 1.500L21 0v10H10zM0 11h9v8.300L0 18zM10 11h11v10l-11-1.500z" /></svg>
      </div>
      <div className="flex w-[429px] items-center border-y border-[#c4c4c4] bg-[#f2f2f2] pl-[14px]">
        <svg width="22" height="22" viewBox="0 0 22 22" fill="none" stroke="#222" strokeWidth="1.600"><circle cx="13.500" cy="8" r="6.500" /><path d="M8.800 12.800L1 21" /></svg>
        <Fit w={163} className="ml-[14px] text-[18px] text-[#2b2b2b]">Type here to search</Fit>
        <div className="ml-auto"><SearchArt /></div>
      </div>
      <TaskButton open={false}>
        <svg width="22" height="22" viewBox="0 0 22 22"><circle cx="11" cy="11" r="8.500" fill="none" stroke="#fff" strokeWidth="2.400" /></svg>
      </TaskButton>
      <TaskButton open={false}>
        <svg width="22" height="20" viewBox="0 0 22 20" fill="none" stroke="#fff" strokeWidth="1.300"><path d="M1 1v2.500h13V1M1 19v-2.500h13V19M2 6h11v8H2zM18.500 0v4M18.500 10v9" /><path d="M17.500 6h2v3h-2z" fill="#fff" /></svg>
      </TaskButton>
      <TaskButton>
        <svg width="30" height="30" viewBox="0 0 30 30">
          <circle cx="15" cy="15" r="15" fill="#fbc116" />
          <path d="M15 0A15 15 0 0 1 28 7.500H15a7.500 7.500 0 0 0-7 5L2 7.500A15 15 0 0 1 15 0z" fill="#e33b2e" />
          <path d="M2 7.500l6.500 11.250A7.500 7.500 0 0 0 17 22.200L14 30A15 15 0 0 1 2 7.500z" fill="#2da94f" />
          <circle cx="15" cy="15" r="7.200" fill="#fff" /><circle cx="15" cy="15" r="5.700" fill="#2a7df0" />
        </svg>
      </TaskButton>
      <TaskButton>
        <svg width="30" height="30" viewBox="0 0 30 30">
          <path d="M1 14C2 5 8 0 16 0c9 0 14 6 14 12 0 5-4 8-8 8-4 0-5-2-4-4 2-4-2-8-7-8-5 0-9 3-10 6z" fill="#3ccf8e" />
          <path d="M1 14C2 5 8 0 16 0c3 0 6 1 8 3C12 3 4 8 1 14z" fill="#35b8e8" />
          <path d="M0 16C0 11 5 8 10 8c5 0 8 3 8 6-3-1-6 1-6 6 0 5 4 9 9 9-3 1-5 1-6 1C6 30 0 23 0 16z" fill="#1377cf" />
          <path d="M12 18c-1 6 4 10 9 9 3 0 5-2 7-4-1 5-6 7-10 7-6-1-8-7-6-12z" fill="#0c4a95" />
        </svg>
      </TaskButton>
      <TaskButton>
        <svg width="28" height="25" viewBox="0 0 28 25"><path d="M0 1h11l2 3h15v19H0z" fill="#ffca4b" /><path d="M0 1h11l1 2.500-2 2H0z" fill="#e39a13" /><path d="M4.500 24v-9q0-3 3-3h13q3 0 3 3v9h-4.500v-6h-10v6z" fill="#3f9be0" /></svg>
      </TaskButton>
      <TaskButton>
        <svg width="31" height="31" viewBox="0 0 31 31" stroke="#2b3a30" strokeWidth="1.800">
          <g stroke="none"><path d="M15.500 0l7.500 7.500-7.500 7.500L8 7.500z" fill="#f08a80" /><path d="M23 8l8 7.500-8 7.500-7-7.500z" fill="#9ad37a" /><path d="M15.500 16l7.500 7.500-7.500 7.500L8 23.500z" fill="#f6dc7c" /><path d="M8 8l7.500 7.500L8 23 0 15.500z" fill="#7fb0f0" /></g>
          <path d="M12 4l8 8M15.500 8v16M16 10l5 5" fill="none" /><circle cx="15.500" cy="10" r="1.800" fill="#2b3a30" /><circle cx="15.500" cy="23" r="1.800" fill="#2b3a30" /><circle cx="21" cy="15.500" r="1.800" fill="#2b3a30" />
        </svg>
      </TaskButton>
      <TaskButton active><LtLogo w={30} h={31} /></TaskButton>

      <div className="ml-auto flex items-center">
        <svg width="30" height="30" viewBox="0 0 30 30">
          <path d="M13 1q-1 7-13 15 8 3 14-1t2-14z" fill="#f0a020" />
          <path d="M7 28a6 6 0 0 1-1-12 8 8 0 0 1 15-2 7 7 0 0 1 3 14z" fill="#bcd4f6" />
          <path d="M7 28a5 5 0 0 1-5-5q10-4 14-2t12-1a6 6 0 0 1-5 8z" fill="#87aef0" />
        </svg>
        <Fit w={34} className="ml-[10px] text-[18px]">37°F</Fit>
        <Fit w={111} className="ml-[11px] text-[18px]">Mostly cloudy</Fit>
        <svg className="ml-[31px]" width="17" height="10" viewBox="0 0 17 10" fill="none" stroke="#fff" strokeWidth="1.500"><path d="M1 9l7.500-7.500L16 9" /></svg>
        <svg className="ml-[15px]" width="15" height="19" viewBox="0 0 15 19" fill="none" stroke="#fff" strokeWidth="1.300"><path d="M2 2q5-2.500 10 0M2 17q5 2.500 10 0M11 8l3-2v7l-3-2" /><rect x="1" y="5" width="9" height="9" rx="1" /></svg>
        <svg className="ml-[12px]" width="20" height="18" viewBox="0 0 20 18" fill="none" stroke="#fff" strokeWidth="1.300"><path d="M6 2h13v10H4V8M12 12v4M7 16.500h9" /><rect x="1" y="1" width="4" height="4" /><path d="M3 5v5" /></svg>
        <svg className="ml-[10px]" width="20" height="18" viewBox="0 0 20 18" fill="none" stroke="#fff" strokeWidth="1.300"><path d="M1 6h3l4-4v14l-4-4H1zM11 6q2 3 0 6M14 4q3.500 5 0 10M17 2q5 7 0 14" /></svg>
        <div className="ml-[12px] flex w-[30px] flex-col items-center text-[15px] leading-[22px]"><Fit w={28.500}>ENG</Fit><Fit w={28.500}>TRQ</Fit></div>
        <div className="ml-[15px] flex w-[70px] flex-col items-center text-[15px] leading-[22px]"><Fit w={54}>2:53 AM</Fit><Fit w={67.500}>12/8/2022</Fit></div>
        <svg className="mt-[5px] ml-[22px]" width="32" height="32" viewBox="0 0 32 32">
          <path d="M1 1h20v16h-9l-4 4v-4H1z" fill="#fff" /><path d="M5 5.500h12M5 9h12M5 12.500h8" stroke="#1b2843" strokeWidth="1.300" />
          <circle cx="20" cy="20" r="10" fill="#33383f" stroke="#9a9a9a" /><text x="20" y="25" textAnchor="middle" fontSize="14" fontWeight="600" fill="#fff">1</text>
        </svg>
        <div className="ml-[13px] h-[50px] w-px bg-[#5a6478]" />
        <div className="w-[5px]" />
      </div>
    </footer>
  );
}

/* ------------------------------------------------------------------ */

const MENU: [string, number, number][] = [["File", 22.5, 16.5], ["View", 32, 16], ["Plot Settings", 83, 16], ["Simulation", 71, 16], ["Tools", 35, 16], ["Window", 55, 16.5], ["Help", 31.5, 0]];

export default function App() {
  return (
    <div className="flex h-[1440px] w-[2560px] flex-col overflow-hidden bg-[#f0f0f0] text-black">
      <div className="flex h-[29px] shrink-0 items-center bg-white">
        <div className="flex w-[27px] pl-[2px]"><LtLogo /></div>
        <Fit w={202} className={UI + " text-[15px] text-black"}>LTspice XVII - Fourth_Quad.raw</Fit>
        <svg className="ml-auto" width="160" height="28" viewBox="2400 0 160 28" fill="none" stroke="#000" strokeWidth="1" shapeRendering="crispEdges">
          <path d="M2405 13.500h12M2463.500 10.500h9v9h-9zM2465.500 10V8.500h9v9H2473" />
          <path d="M2522.500 8.500l11 11M2533.500 8.500l-11 11" shapeRendering="auto" />
        </svg>
      </div>

      <nav className={UI + " flex h-[26px] shrink-0 items-center border-b border-[#a0a0a0] pl-2 text-[15px]"}>
        {MENU.map(([m, w, gap]) => (
          <div key={m} style={{ marginRight: gap }}>
            <Fit w={w}><span className="underline decoration-1 underline-offset-2">{m[0]}</span>{m.slice(1)}</Fit>
          </div>
        ))}
      </nav>

      <Toolbar />

      <div className={UI + " flex h-[29px] shrink-0 border-l-2 border-[#808080] pl-[2px] text-[15px]"}>
        <div className="flex flex-1 flex-col">
          <div className="flex h-[25px] border-b border-[#dcdcdc]">
            <div className="mt-[2px] flex w-[135px] items-center border-t border-l border-[#dcdcdc] pl-[6px]">
              <AscIcon s={17} />
              <Fit w={102} className="ml-[4px]">Fourth_Quad.asc</Fit>
            </div>
            <div className="-mb-px flex w-[138px] items-center border-x border-[#dcdcdc] bg-white pb-[4px] pl-[6px]">
              <RawIcon s={17} />
              <Fit w={101} className="ml-[5px]">Fourth_Quad.raw</Fit>
            </div>
          </div>
          <div className="h-[2px] border-b border-[#dcdcdc] bg-white" />
        </div>
      </div>

      <main className="flex h-[1246px] shrink-0 flex-col border-r-2 border-l-2 border-r-[#dcdcdc] border-l-[#808080] bg-[#f0f0f0]">
        <ChildWindow active title="Fourth_Quad.raw" icon={<PlotIcon />}><Plot /></ChildWindow>
        <ChildWindow active={false} title="Fourth_Quad.asc" icon={<AscIcon s={19} />}><Schematic /></ChildWindow>
      </main>

      <div className={UI + " flex h-[22px] shrink-0 items-center border-t border-[#d8d8d8] pl-[2px] text-[15px]"}>
        <Fit w={79}>x = 11.03ms</Fit>
        <Fit w={121} className="ml-4">y = 404.15V, 6.21A</Fit>
      </div>

      <Taskbar />
    </div>
  );
}
